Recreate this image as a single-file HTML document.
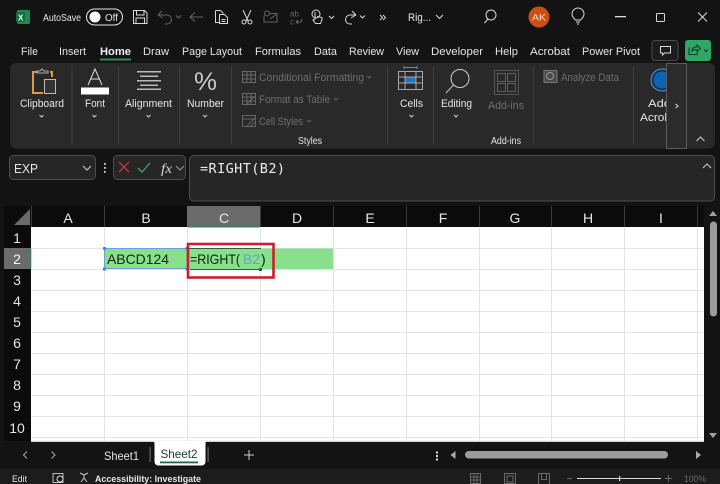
<!DOCTYPE html>
<html><head><meta charset="utf-8"><style>
html,body{margin:0;padding:0;background:#131313;width:720px;height:484px;overflow:hidden}
svg{display:block}
text{font-family:"Liberation Sans",sans-serif;fill:#e6e6e6;font-size:11px}
.d{fill:#6e6e6e}
.i{fill:none;stroke:#d8d8d8;stroke-width:1}
.g{fill:none;stroke:#666;stroke-width:1}
.c{fill:none;stroke:#d0d0d0;stroke-width:1}
</style></head><body>
<svg width="720" height="484" viewBox="0 0 720 484" xmlns="http://www.w3.org/2000/svg">
<rect width="720" height="484" fill="#131313"/>

<!-- Title bar -->
<rect x="17" y="10" width="13" height="14" rx="1.5" fill="#1f8a50"/>
<rect x="16" y="12" width="9" height="10" rx="1" fill="#107040"/>
<text x="18" y="20.5" style="font-size:8px;font-weight:bold;fill:#fff">X</text>
<text x="43" y="21" textLength="38" lengthAdjust="spacingAndGlyphs" style="font-size:10px">AutoSave</text>
<rect x="86.5" y="9" width="36" height="16" rx="8" fill="#141414" stroke="#e8e8e8"/>
<circle cx="95" cy="17" r="5.5" fill="#fff"/>
<text x="105" y="21" textLength="13" lengthAdjust="spacingAndGlyphs" style="font-size:10px">Off</text>
<!-- save -->
<path class="i" d="M133.5 10.5h11l2.500 2.500v10.500h-13.500zM136.500 10.500v4.500h7.500v-4.500M136 23.500v-5.500h8.500v5.500"/>
<!-- undo -->
<path class="g" d="M158 15l4-4M158 15l5 3M158 15h9a4.500 4.500 0 0 1 0 9h-2"/>
<path class="g" d="M176 15.500l2.500 2.500 2.500-2.500"/>
<path class="g" d="M190 17h13M190 17l5-4.500M190 17l5 4.500"/>
<!-- copy/paste -->
<path class="i" d="M215.500 10.500h5l3 3M215.500 10.500v12h3.500M219.500 14.500h5l3 3v6h-8zM221.500 19.500h4M221.500 21.500h4"/>
<!-- scissors -->
<path class="i" d="M243 10l5 11M251 10l-5 11"/>
<circle class="i" cx="244" cy="22" r="2"/><circle class="i" cx="250" cy="22" r="2"/>
<!-- mail -->
<path class="g" d="M269 13.500h7M264 15.500v6.500h13v-9M270 19l7-5"/><circle class="g" cx="267" cy="13.500" r="2.500"/>
<!-- ab -->
<text x="290" y="16.500" style="font-size:8px;fill:#666">ab</text>
<text x="290" y="24.500" style="font-size:8px;fill:#666">c</text>
<path class="g" d="M296 22h5l1-3M296 22l2-2M296 22l2 2"/>
<!-- touch -->
<circle class="i" cx="316" cy="14" r="4"/>
<path class="i" d="M315 12v7l-2 1 2.500 3.500h5l1.500-4v-2l-5-1"/>
<path class="i" d="M329 16l2.500 2.500 2.500-2.500"/>
<!-- redo -->
<path class="i" d="M356 15l-4-4M356 15l-5 3M356 15h-6a4.500 4.500 0 0 0 0 9h2"/>
<path class="i" d="M360 15.500l2.500 2.500 2.500-2.500"/>
<path class="i" d="M380 15l2.500 2.500-2.500 2.500M383 15l2.500 2.500-2.500 2.500"/>
<text x="408" y="21" textLength="23" lengthAdjust="spacingAndGlyphs" style="font-size:11px">Rig...</text>
<path class="i" d="M436 15l3.500 3.500 3.500-3.500"/>
<circle cx="491" cy="15" r="5" class="i"/><path class="i" d="M488 19l-3.500 4"/>
<circle cx="539" cy="17" r="10.500" fill="#ca5010"/>
<text x="532" y="20.500" textLength="14" lengthAdjust="spacingAndGlyphs" style="font-size:9.500px;fill:#f6e2d4">AK</text>
<path class="i" d="M575.500 20c-2-2-3.500-3.500-3.500-6a6 6 0 0 1 12 0c0 2.500-1.500 4-3.500 6zM576 22h4M577 24h2"/>
<rect x="615" y="16" width="11" height="1.300" fill="#e0e0e0"/>
<rect x="656.500" y="13.500" width="8" height="8" rx="1" class="i"/>
<path class="i" d="M698 12.500l9 9M707 12.500l-9 9"/>

<!-- Tabs -->
<text x="21" y="55" textLength="17" lengthAdjust="spacingAndGlyphs">File</text>
<text x="59" y="55" textLength="27" lengthAdjust="spacingAndGlyphs">Insert</text>
<text x="100" y="55" textLength="31" lengthAdjust="spacingAndGlyphs" style="font-weight:bold;fill:#f0f0f0">Home</text>
<rect x="100" y="58.500" width="31" height="2" fill="#2f8a5b"/>
<text x="143" y="55" textLength="26" lengthAdjust="spacingAndGlyphs">Draw</text>
<text x="182" y="55" textLength="60" lengthAdjust="spacingAndGlyphs">Page Layout</text>
<text x="255" y="55" textLength="46" lengthAdjust="spacingAndGlyphs">Formulas</text>
<text x="314" y="55" textLength="23" lengthAdjust="spacingAndGlyphs">Data</text>
<text x="349" y="55" textLength="35" lengthAdjust="spacingAndGlyphs">Review</text>
<text x="396" y="55" textLength="23" lengthAdjust="spacingAndGlyphs">View</text>
<text x="431" y="55" textLength="52" lengthAdjust="spacingAndGlyphs">Developer</text>
<text x="495" y="55" textLength="23" lengthAdjust="spacingAndGlyphs">Help</text>
<text x="530" y="55" textLength="40" lengthAdjust="spacingAndGlyphs">Acrobat</text>
<text x="582" y="55" textLength="58" lengthAdjust="spacingAndGlyphs">Power Pivot</text>
<rect x="652" y="40.500" width="26" height="20" rx="3" fill="#1c1c1c" stroke="#4a4a4a"/>
<path class="i" d="M660.500 46.500h10v6.500h-6l-2 2v-2h-2z"/>
<rect x="685" y="40" width="26" height="21" rx="3" fill="#2fa866"/>
<path d="M689 47.500v7h8.500v-3M692 51c0-3 2-4 5-4v-2l3.500 3.500-3.500 3v-2c-2 0-4 .5-5 1.500z" fill="none" stroke="#0e3a22"/>
<path d="M704 49.500l2 2 2-2" fill="none" stroke="#0e3a22"/>

<!-- Ribbon -->
<rect x="10" y="63" width="705" height="85.500" rx="6" fill="#292929"/>
<g fill="#3f3f3f">
<rect x="71.500" y="67" width="1" height="77"/><rect x="118" y="67" width="1" height="77"/><rect x="179" y="67" width="1" height="77"/><rect x="231" y="67" width="1" height="77"/><rect x="387" y="67" width="1" height="77"/><rect x="433" y="67" width="1" height="77"/><rect x="533" y="67" width="1" height="77"/><rect x="633" y="67" width="1" height="77"/>
</g>
<!-- Clipboard -->
<path d="M38 72h-5v21h10" fill="none" stroke="#d99a45" stroke-width="2"/>
<path d="M50 72h2v5" fill="none" stroke="#d99a45" stroke-width="2"/>
<path d="M37 73v-2h3l2-2 2 2h4v2z" fill="none" stroke="#aaa"/>
<rect x="44.500" y="79.500" width="11" height="14" fill="#333" stroke="#bbb"/>
<text x="20" y="107" textLength="44" lengthAdjust="spacingAndGlyphs">Clipboard</text>
<path class="c" d="M39.500 115l2 2 2-2"/>
<!-- Font -->
<path d="M88 85l7-16 7 16M90.500 79h9" fill="none" stroke="#dedede"/>
<rect x="81" y="87.500" width="28" height="7" fill="#fff"/>
<text x="85" y="107" textLength="20" lengthAdjust="spacingAndGlyphs">Font</text>
<path class="c" d="M92.500 115l2 2 2-2"/>
<!-- Alignment -->
<g fill="#bdbdbd"><rect x="137" y="71" width="24" height="1.500"/><rect x="140" y="75.500" width="18" height="1.500"/><rect x="137" y="80" width="24" height="1.500"/><rect x="140" y="84.500" width="18" height="1.500"/><rect x="137" y="88.500" width="24" height="1.500"/></g>
<text x="125" y="107" textLength="47" lengthAdjust="spacingAndGlyphs">Alignment</text>
<path class="c" d="M146.500 115l2 2 2-2"/>
<!-- Number -->
<text x="194" y="90" textLength="23" lengthAdjust="spacingAndGlyphs" style="font-size:25px;fill:#c8c8c8">%</text>
<text x="187" y="107" textLength="37" lengthAdjust="spacingAndGlyphs">Number</text>
<path class="c" d="M203 115l2 2 2-2"/>
<!-- Styles -->
<g class="g"><rect x="242.500" y="71.500" width="13" height="11"/><path d="M242.500 75h13M242.500 79h13M247 71.500v11M251 71.500v11"/>
<rect x="242.500" y="93.500" width="13" height="11"/><path d="M242.500 97h13M242.500 101h13M247 93.500v11M251 93.500v11M246 105l9-9"/>
<rect x="242.500" y="115.500" width="13" height="11"/><path d="M242.500 119h13M246 127l9-9M250 127l5-5"/></g>
<text x="259" y="81" textLength="105" lengthAdjust="spacingAndGlyphs" class="d">Conditional Formatting</text>
<path class="g" d="M367 76l2 2 2-2"/>
<text x="259" y="103" textLength="71" lengthAdjust="spacingAndGlyphs" class="d">Format as Table</text>
<path class="g" d="M334 98l2 2 2-2"/>
<text x="259" y="125" textLength="44" lengthAdjust="spacingAndGlyphs" class="d">Cell Styles</text>
<path class="g" d="M307 120l2 2 2-2"/>
<text x="298" y="144" textLength="24" lengthAdjust="spacingAndGlyphs" style="font-size:10px">Styles</text>
<!-- Cells -->
<rect x="398.500" y="71.500" width="24" height="18" fill="none" stroke="#a8a8a8"/>
<rect x="405" y="77" width="11" height="6" fill="#2277cc"/>
<path d="M398.500 77h24M398.500 83h24M405 71.500v18M416 71.500v18" stroke="#a8a8a8" fill="none"/>
<path d="M404 67.500h13M404 66v3M417 66v3" stroke="#4f8fcf" fill="none"/>
<text x="400" y="107" textLength="23" lengthAdjust="spacingAndGlyphs">Cells</text>
<path class="c" d="M409.500 115l2 2 2-2"/>
<!-- Editing -->
<circle cx="460" cy="78.500" r="9" fill="none" stroke="#d0d0d0"/><path d="M453.500 85l-7.500 8" stroke="#c0c0c0" fill="none"/>
<text x="441" y="107" textLength="31" lengthAdjust="spacingAndGlyphs">Editing</text>
<path class="c" d="M454 115l2 2 2-2"/>
<!-- Add-ins -->
<rect x="494.500" y="70.500" width="24" height="24" fill="none" stroke="#555"/>
<g fill="none" stroke="#5e5e5e"><rect x="497.500" y="73.500" width="8" height="8"/><rect x="507.500" y="73.500" width="8" height="8"/><rect x="497.500" y="83.500" width="8" height="8"/><rect x="507.500" y="83.500" width="8" height="8"/></g>
<text x="488" y="109" textLength="36" lengthAdjust="spacingAndGlyphs" class="d">Add-ins</text>
<text x="491" y="144" textLength="30" lengthAdjust="spacingAndGlyphs" style="font-size:10px">Add-ins</text>
<!-- Analyze -->
<rect x="544" y="70.500" width="13" height="12" fill="#4a4a4a" stroke="#777"/>
<circle cx="550" cy="76" r="3.500" fill="none" stroke="#999"/>
<text x="561" y="81" textLength="58" lengthAdjust="spacingAndGlyphs" class="d">Analyze Data</text>
<!-- Adobe -->
<circle cx="662" cy="80" r="11" fill="#16304a" stroke="#4b9ddc" stroke-width="1"/>
<circle cx="662" cy="80" r="8.500" fill="#0c62b5"/>
<text x="648" y="107" textLength="23" lengthAdjust="spacingAndGlyphs">Ado</text>
<text x="640" y="121" textLength="31" lengthAdjust="spacingAndGlyphs">Acrob</text>
<rect x="666.500" y="63.500" width="20" height="85" fill="#2b2b2b" stroke="#5c5c5c"/>
<path class="i" d="M675.500 104l2.500 2-2.500 2"/>
<path class="c" d="M696.500 141l4-4 4 4"/>

<!-- Formula bar -->
<rect x="9.500" y="155.500" width="86" height="24" rx="4" fill="#262626" stroke="#4d4d4d"/>
<text x="14" y="173" textLength="24" lengthAdjust="spacingAndGlyphs" style="font-size:13px">EXP</text>
<path class="c" d="M83 166l4 4 4-4"/>
<g fill="#cfcfcf"><rect x="104" y="163" width="1.800" height="1.800"/><rect x="104" y="167" width="1.800" height="1.800"/><rect x="104" y="171" width="1.800" height="1.800"/></g>
<rect x="113.500" y="155.500" width="72" height="24" rx="4" fill="#262626" stroke="#4d4d4d"/>
<path d="M119 162l10 10M129 162l-10 10" stroke="#c6393f" stroke-width="1.300" fill="none"/>
<path d="M138 168l4 4 8-9" stroke="#3fa45f" stroke-width="1.300" fill="none"/>
<text x="161" y="173" textLength="11" lengthAdjust="spacingAndGlyphs" style="font-family:'Liberation Serif',serif;font-style:italic;font-size:14px;fill:#d8d8d8">fx</text>
<path class="g" d="M176 166l4 4 4-4" style="stroke:#999"/>
<rect x="189.500" y="155.500" width="525" height="45.500" rx="4" fill="#262626" stroke="#4d4d4d"/>
<text x="200" y="173" textLength="85" style="font-family:'DejaVu Sans Mono','Liberation Mono',monospace;font-size:13.500px;fill:#ececec">=RIGHT(B2)</text>
<path class="c" d="M703 168l4-4 4 4"/>

<!-- Grid -->
<rect x="4" y="206" width="700" height="21" fill="#0b0b0b"/>
<rect x="4" y="227" width="27" height="214" fill="#0b0b0b"/>
<rect x="31" y="227" width="673" height="214" fill="#fff"/>
<path d="M30 209v16H14z" fill="#6a6a6a"/>
<rect x="187" y="206" width="73" height="21" fill="#6b6b6b"/>
<rect x="187" y="226" width="73" height="1.500" fill="#3f7f5f"/>
<rect x="4" y="248" width="27" height="21" fill="#6b6b6b"/>
<rect x="30" y="248" width="1.300" height="21" fill="#3f7f5f"/>
<g stroke="#3a3a3a"><path d="M31.500 206v21M104.500 206v21M260.500 206v21M333.500 206v21M406.500 206v21M479.500 206v21M551.500 206v21M624.500 206v21M697.500 206v21"/></g>
<g stroke="#e3e3e3"><path d="M104.500 227v214M187.500 227v214M260.500 227v214M333.500 227v214M406.500 227v214M479.500 227v214M551.500 227v214M624.500 227v214M697.500 227v214"/>
<path d="M31 248.500h673M31 269.500h673M31 290.500h673M31 311.500h673M31 332.500h673M31 353.500h673M31 374.500h673M31 395.500h673M31 416.500h673M31 437.500h673"/></g>
<g style="font-size:14px" text-anchor="middle">
<text x="68" y="223" style="font-size:14px" text-anchor="middle">A</text>
<text x="146" y="223" style="font-size:14px" text-anchor="middle">B</text>
<text x="224" y="223" style="font-size:14px" text-anchor="middle">C</text>
<text x="297" y="223" style="font-size:14px" text-anchor="middle">D</text>
<text x="370" y="223" style="font-size:14px" text-anchor="middle">E</text>
<text x="443" y="223" style="font-size:14px" text-anchor="middle">F</text>
<text x="515" y="223" style="font-size:14px" text-anchor="middle">G</text>
<text x="588" y="223" style="font-size:14px" text-anchor="middle">H</text>
<text x="661" y="223" style="font-size:14px" text-anchor="middle">I</text>
<text x="17" y="243" style="font-size:14px" text-anchor="middle">1</text>
<text x="17" y="264" style="font-size:14px;fill:#f5f5f5" text-anchor="middle">2</text>
<text x="17" y="285" style="font-size:14px" text-anchor="middle">3</text>
<text x="17" y="306" style="font-size:14px" text-anchor="middle">4</text>
<text x="17" y="327" style="font-size:14px" text-anchor="middle">5</text>
<text x="17" y="348" style="font-size:14px" text-anchor="middle">6</text>
<text x="17" y="369" style="font-size:14px" text-anchor="middle">7</text>
<text x="17" y="390" style="font-size:14px" text-anchor="middle">8</text>
<text x="17" y="411" style="font-size:14px" text-anchor="middle">9</text>
<text x="17" y="433" style="font-size:14px" text-anchor="middle">10</text>
</g>
<!-- Cells content -->
<rect x="105" y="248.500" width="228" height="20.500" fill="#88df8c"/>
<rect x="104.500" y="248.500" width="82.500" height="20" fill="none" stroke="#6f9fd8"/>
<g fill="#4a88cf"><rect x="103" y="247" width="3" height="3"/><rect x="185.500" y="247" width="3" height="3"/><rect x="103" y="267.500" width="3" height="3"/><rect x="185.500" y="267.500" width="3" height="3"/></g>
<text x="107" y="264" textLength="62" lengthAdjust="spacingAndGlyphs" style="font-size:14px;fill:#10240f">ABCD124</text>
<path d="M188 248.500h73M190 269.500h70" fill="none" stroke="#2e5f3a"/>
<rect x="259" y="268" width="3" height="3" fill="#2e5f3a"/>
<text x="190" y="264" textLength="50" lengthAdjust="spacingAndGlyphs" style="font-size:14px;fill:#10240f">=RIGHT(</text>
<text x="243" y="264" textLength="17" lengthAdjust="spacingAndGlyphs" style="font-size:14px;fill:#58a8cc">B2</text>
<text x="261" y="264" style="font-size:14px;fill:#10240f">)</text>
<rect x="188" y="244" width="85.500" height="33.500" fill="none" stroke="#cc1f2c" stroke-width="2.600"/>

<!-- Vertical scrollbar -->
<path d="M709 216l4-5 4 5z" fill="#a0a0a0"/>
<rect x="710" y="221.500" width="7" height="95" rx="3.500" fill="#9c9c9c"/>
<path d="M709 433l4 5 4-5z" fill="#a0a0a0"/>

<!-- Sheet bar -->
<rect x="0" y="441" width="720" height="31" fill="#131313"/>
<rect x="31" y="440.500" width="673" height="1.500" fill="#e8e8e8" opacity=".9"/>
<path class="g" d="M27 451.500l-3.500 3.500 3.500 3.500M51.500 451.500l3.500 3.500-3.500 3.500" style="stroke:#aaa"/>
<text x="104" y="460" textLength="35" lengthAdjust="spacingAndGlyphs" style="font-size:12px">Sheet1</text>
<rect x="149.500" y="447" width="1.200" height="15" fill="#666"/>
<path d="M152 441c2 0 2.500 1 2.500 3v17c0 3 1.500 4.500 4 4.500h43c2.500 0 4-1.500 4-4.500v-17c0-2 .5-3 2.500-3z" fill="#fff"/>
<text x="160.500" y="458" textLength="37" lengthAdjust="spacingAndGlyphs" style="font-size:12px;fill:#154030">Sheet2</text>
<rect x="160" y="461.500" width="38" height="1.800" fill="#1c6b45"/>
<rect x="207.500" y="447" width="1.200" height="15" fill="#666"/>
<path d="M249 450v10M244 455h10" stroke="#cfcfcf" fill="none"/>
<g fill="#e0e0e0"><rect x="436" y="451.500" width="2" height="2"/><rect x="436" y="455" width="2" height="2"/><rect x="436" y="458.500" width="2" height="2"/></g>
<path d="M455.500 451v8l-5-4z" fill="#aaa"/>
<rect x="465" y="451" width="203" height="7.500" rx="3.700" fill="#9c9c9c"/>
<path d="M696 451v8l5-4z" fill="#aaa"/>

<!-- Status bar -->
<rect x="0" y="469" width="720" height="15" fill="#1c1c1c"/>
<text x="12" y="482" textLength="15" lengthAdjust="spacingAndGlyphs" style="font-size:9.500px">Edit</text>
<rect x="53" y="473.500" width="10" height="9" fill="none" stroke="#bbb"/><circle cx="60" cy="479" r="3" fill="#1c1c1c" stroke="#ddd"/>
<path d="M80 473l4 2 4-2M84 475v3l-3 4M84 478l3 4" fill="none" stroke="#ccc"/>
<text x="95" y="482" textLength="106" lengthAdjust="spacingAndGlyphs" style="font-size:9.500px;font-weight:bold">Accessibility: Investigate</text>
<g fill="none" stroke="#6a6a6a"><rect x="470.500" y="473.500" width="10" height="10"/><path d="M474 473.500v10M477 473.500v10M470.500 477h10M470.500 480h10"/>
<rect x="504.500" y="473.500" width="11" height="10"/><rect x="507" y="476" width="6" height="6"/>
<path d="M538.500 484v-10.500h11V484M541.500 474v5.500h5v-5.500"/></g>
<rect x="567" y="478" width="5" height="1" fill="#666"/>
<rect x="577" y="478" width="84" height="1" fill="#d8d8d8"/>
<rect x="619" y="476" width="1.200" height="5" fill="#d8d8d8"/>
<path d="M665 478.500h7M668.500 475v7" stroke="#6a6a6a" fill="none"/>
<text x="684" y="482" textLength="22" lengthAdjust="spacingAndGlyphs" style="font-size:9.500px;fill:#6a6a6a">100%</text>
</svg>
</body></html>
